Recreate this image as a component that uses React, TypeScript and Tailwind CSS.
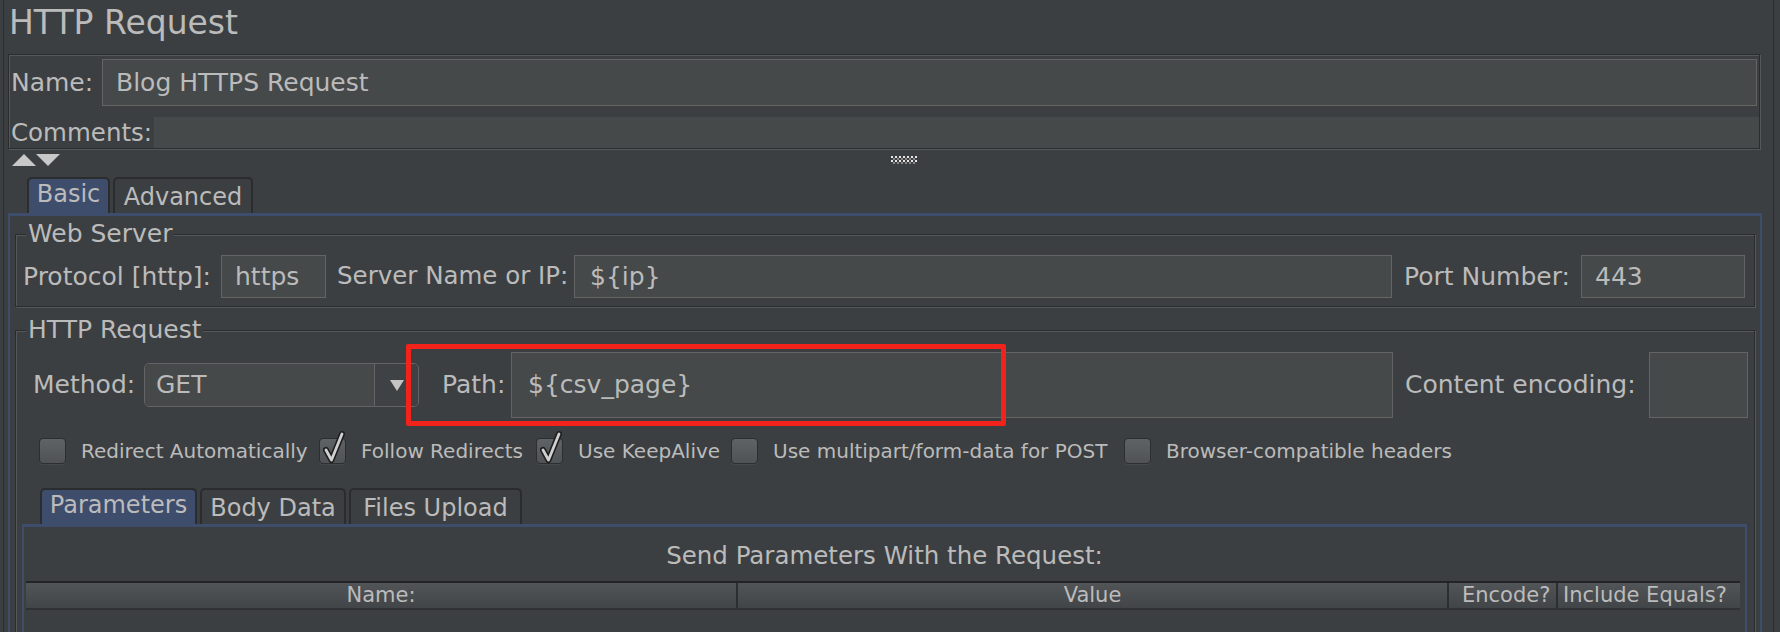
import React from "react";

const box = "bg-[#45494a] border border-[#646464] flex items-center pl-[13px]";
const etched = "border border-[#2a2c2e] shadow-[inset_1px_1px_0_#55585b,1px_1px_0_#55585b]";

function Group({ title, className, children }: { title: string; className: string; children: React.ReactNode }) {
  return (
    <div className={`${etched} ${className}`}>
      <div className="-mt-[15px] ml-[10px] w-fit px-[2px] bg-[#3c3f41] text-[25px] leading-[28px]">{title}</div>
      {children}
    </div>
  );
}

function Tab({ label, selected, className }: { label: string; selected?: boolean; className: string }) {
  return (
    <div
      className={`h-full rounded-t-[5px] border-2 border-b-0 border-[#2a2c2e] flex items-center justify-center text-[24px] ${
        selected ? "bg-[#3e4d6c] pb-[4px]" : "bg-[#3c3f41] pt-[2px]"
      } ${className}`}
    >
      {label}
    </div>
  );
}

function Check({ label, checked, className }: { label: string; checked?: boolean; className: string }) {
  return (
    <div className={`flex items-center shrink-0 ${className}`}>
      <div className="relative w-[27px] h-[26px] shrink-0 rounded-[4px] border border-[#2c2e30] bg-linear-to-b from-[#606366] to-[#505356] shadow-[0_1px_0_#46494c]">
        {checked && (
          <svg className="absolute left-0 top-0 overflow-visible" width="27" height="26" viewBox="0 0 27 26">
            <path d="M6 11 L11.5 21 L22 -5" fill="none" stroke="#1c1d1e" strokeWidth="6" strokeLinecap="round" strokeLinejoin="round" />
            <path d="M6 11 L11.5 21 L22 -5" fill="none" stroke="#d0d0d0" strokeWidth="2.8" strokeLinecap="round" strokeLinejoin="round" />
          </svg>
        )}
      </div>
      <span className="ml-[15px] text-[20px] whitespace-nowrap">{label}</span>
    </div>
  );
}

function Grip() {
  const cells: React.ReactNode[] = [];
  for (let r = 0; r < 4; r++) {
    for (let c = 0; c < 13; c++) {
      if ((r + c) % 2 === 0) {
        cells.push(<rect key={`${r}-${c}`} x={c * 2} y={r * 2} width="2" height="2" fill={r % 2 === 0 ? "#e6e6e6" : "#8a8a8a"} />);
      }
    }
  }
  return (
    <svg className="ml-[831px] mt-[3px]" width="26" height="8" viewBox="0 0 26 8">
      {cells}
    </svg>
  );
}

export default function App() {
  return (
    <div className="relative w-[1780px] h-[632px] overflow-hidden bg-[#3c3f41] text-[#bbbbbb] font-['DejaVu_Sans',sans-serif]">
      <div className="ml-[3px] w-[1771px] h-full border-x border-[#2a2c2e]">
        {/* title */}
        <div className="h-[54px] pl-[5px] text-[33px] leading-[46px]">HTTP Request</div>

        {/* name + comments */}
        <div className={`ml-[4px] mr-[13px] pt-[4px] ${etched}`}>
          <div className="flex items-center h-[47px] pl-[2px] pr-[2px]">
            <span className="w-[91px] shrink-0 text-[25px]">Name:</span>
            <div className={`${box} flex-1 h-full text-[25px] pl-[11px]`}>Blog HTTPS Request</div>
          </div>
          <div className="mt-[11px] flex h-[31px] pl-[2px]">
            <span className="w-[143px] shrink-0 text-[24.5px] leading-[31px]">Comments:</span>
            <div className="flex-1 bg-[#45494a]" />
          </div>
        </div>

        {/* collapse arrows + splitter grip */}
        <div className="mt-[4px] h-[13px] flex items-start">
          <svg className="ml-[8px]" width="48" height="13" viewBox="0 0 48 13">
            <polygon points="0,13 12,1 24,13" fill="#c8c8c8" />
            <polygon points="24,1 48,1 36,13" fill="#c8c8c8" />
          </svg>
          <Grip />
        </div>

        {/* top tabs */}
        <div className="mt-[11px] h-[36px] flex items-end pl-[23px] gap-[3px]">
          <Tab label="Basic" selected className="w-[83px]" />
          <Tab label="Advanced" className="w-[140px]" />
        </div>

        {/* tab content */}
        <div className="ml-[4px] mr-[11px] border-t-[3px] border-x-2 border-[#3e4d6c] pb-[200px]">
          <Group title="Web Server" className="mt-[18px] mx-[5px] pb-[8px]">
            <div className="mt-[7px] h-[43px] flex items-center pl-[7px] pr-[9px] text-[25px]">
              <span className="w-[198px] shrink-0 whitespace-nowrap">Protocol [http]:</span>
              <div className={`${box} w-[105px] shrink-0 h-full`}>https</div>
              <span className="ml-[11px] w-[237px] shrink-0 whitespace-nowrap text-[24.5px]">Server Name or IP:</span>
              <div className={`${box} flex-1 h-full pl-[15px]`}>{"${ip}"}</div>
              <span className="ml-[12px] w-[177px] shrink-0 whitespace-nowrap">Port Number:</span>
              <div className={`${box} w-[164px] shrink-0 h-full`}>443</div>
            </div>
          </Group>

          <Group title="HTTP Request" className="mt-[23px] mx-[5px]">
            <div className="mt-[8px] h-[66px] flex items-center pl-[17px] pr-[6px] text-[25px]">
              <span className="w-[111px] shrink-0">Method:</span>
              <div className="w-[275px] shrink-0 h-[44px] flex rounded-[5px] border border-[#646464] overflow-hidden">
                <div className="flex-1 bg-[#45494a] flex items-center pl-[11px]">GET</div>
                <div className="w-[44px] border-l border-[#646464] bg-[#3f4244] flex items-center justify-center">
                  <svg width="14" height="11" viewBox="0 0 14 11">
                    <polygon points="0,0 14,0 7,11" fill="#c4c4c4" />
                  </svg>
                </div>
              </div>
              <span className="ml-[23px] w-[69px] shrink-0">Path:</span>
              <div className={`${box} flex-1 h-full pl-[16px]`}>{"${csv_page}"}</div>
              <span className="ml-[12px] w-[244px] shrink-0 whitespace-nowrap">Content encoding:</span>
              <div className={`${box} w-[99px] shrink-0 h-full`} />
            </div>

            <div className="mt-[20px] h-[26px] flex items-center pl-[23px]">
              <Check label="Redirect Automatically" className="w-[280px]" />
              <Check label="Follow Redirects" checked className="w-[217px]" />
              <Check label="Use KeepAlive" checked className="w-[195px]" />
              <Check label="Use multipart/form-data for POST" className="w-[393px]" />
              <Check label="Browser-compatible headers" className="w-[330px]" />
            </div>

            <div className="mt-[24px] h-[36px] flex items-end pl-[24px] gap-[3px]">
              <Tab label="Parameters" selected className="w-[157px]" />
              <Tab label="Body Data" className="w-[146px]" />
              <Tab label="Files Upload" className="w-[173px]" />
            </div>

            <div className="ml-[6px] mr-[7px] border-t-[3px] border-x-2 border-[#3e4d6c]">
              <div className="h-[54px] pt-[4px] flex items-center justify-center text-[24.5px]">
                Send Parameters With the Request:
              </div>
              <div className="ml-[2px] mr-[5px] border-t-2 border-[#232425]">
                <div className="h-[27px] flex text-[21px] bg-linear-to-b from-[#515558] to-[#424548] border-b-2 border-[#2f3133]">
                  <div className="w-[712px] shrink-0 flex items-center justify-center border-r-2 border-[#2c2e30]">Name:</div>
                  <div className="w-[711px] shrink-0 flex items-center justify-center border-r-2 border-[#2c2e30]">Value</div>
                  <div className="w-[109px] shrink-0 flex items-center pl-[13px] border-r-2 border-[#2c2e30]">Encode?</div>
                  <div className="flex-1 flex items-center pl-[5px]">Include Equals?</div>
                </div>
                <div className="h-[120px] bg-[#3c3f41]" />
              </div>
            </div>
          </Group>
        </div>
      </div>

      {/* red annotation */}
      <div className="absolute left-[406px] top-[344px] w-[600px] h-[82px] border-[5px] border-[#f2231a] rounded-[2px]" />
    </div>
  );
}
